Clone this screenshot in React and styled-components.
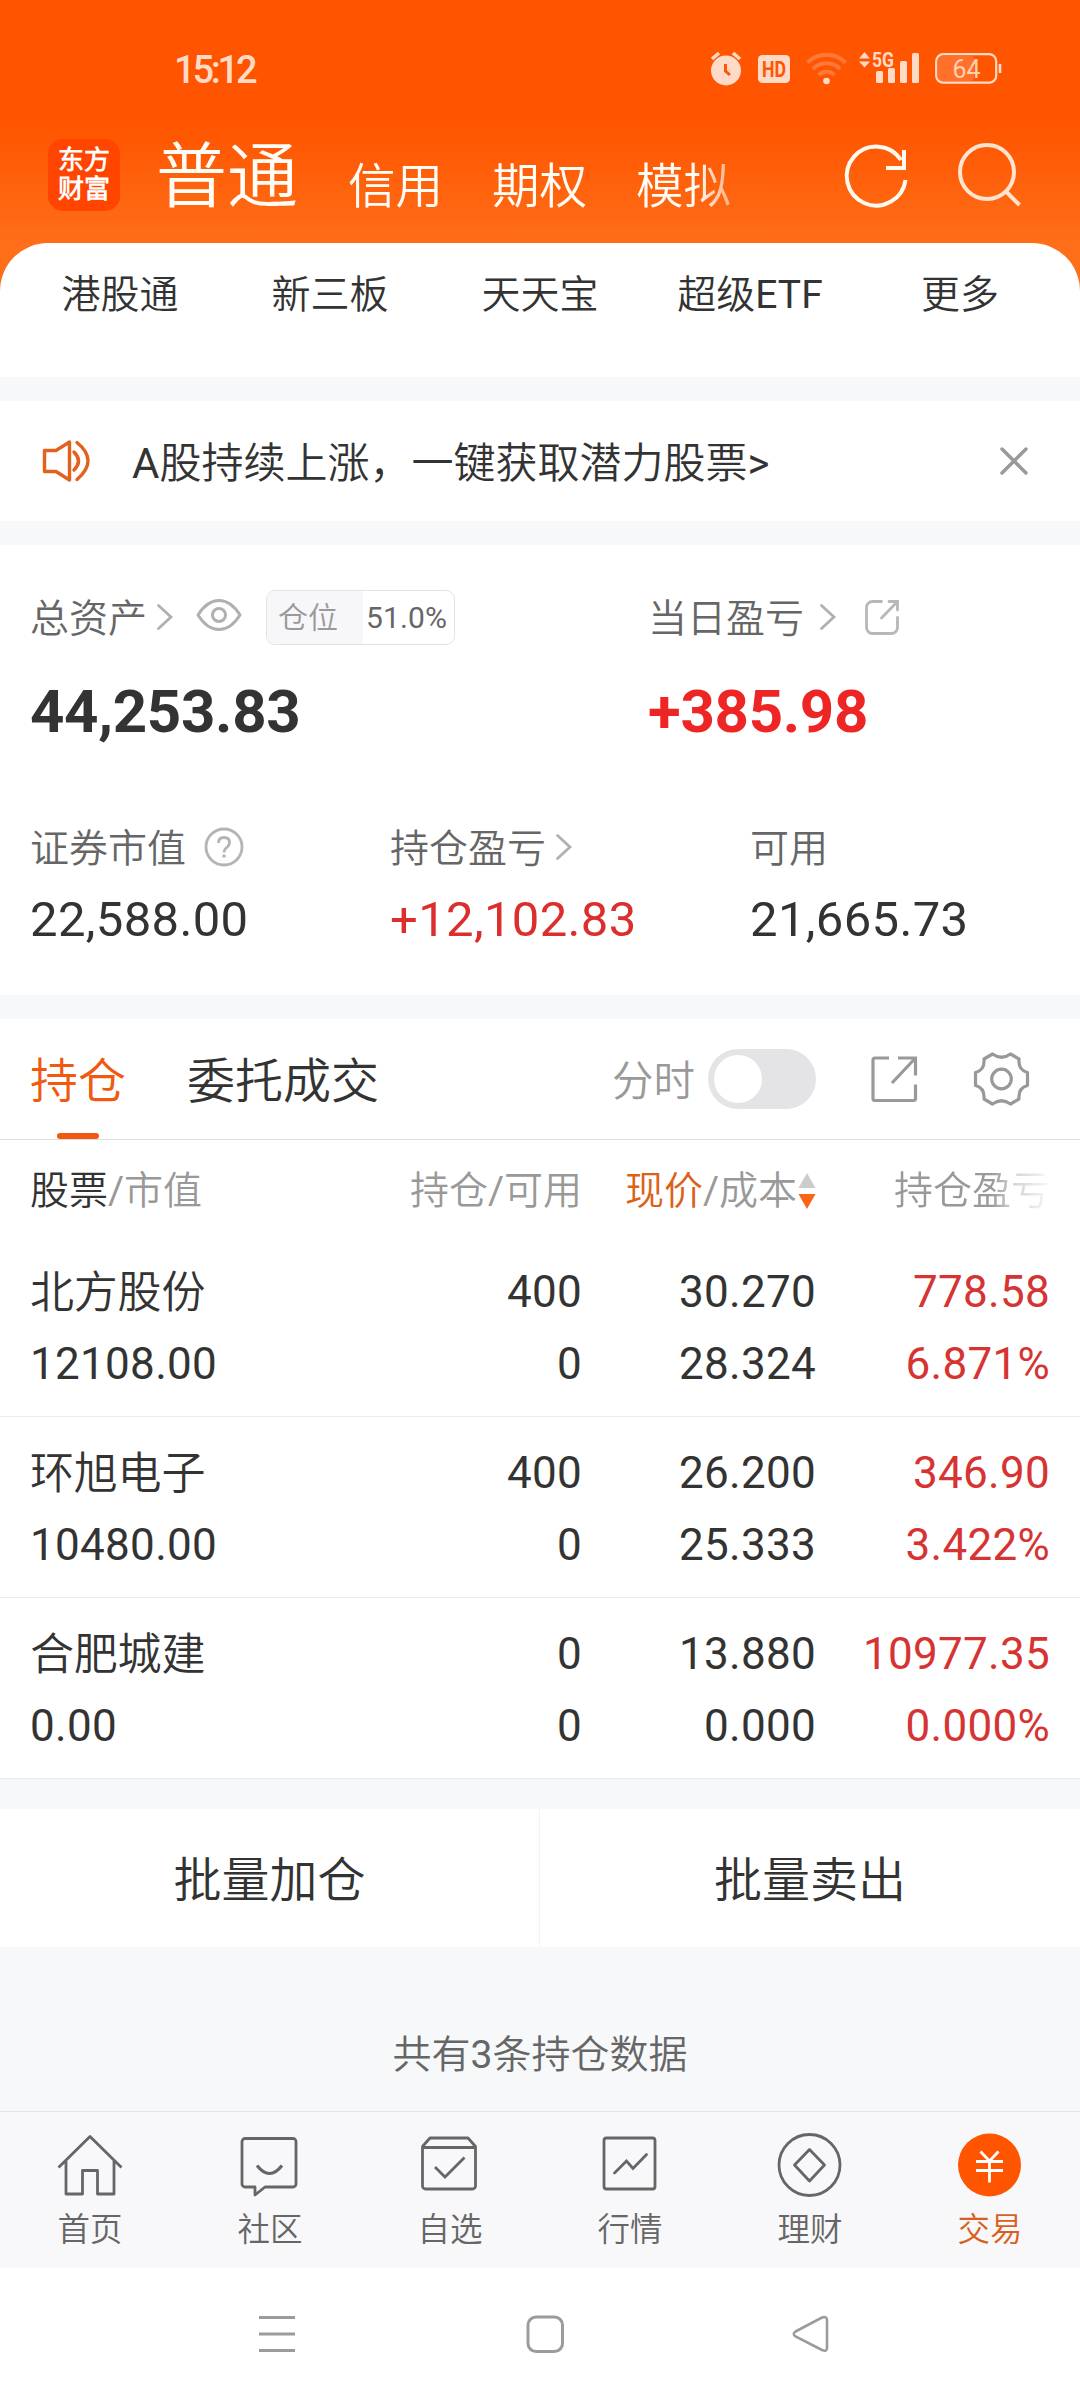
import React from "react";
import styled, { createGlobalStyle } from "styled-components";

const Global = createGlobalStyle`
  * { box-sizing: border-box; }
  html, body { margin: 0; padding: 0; background: #fff; }
  body {
    font-family: Roboto, "Noto Sans CJK SC DemiLight", "Noto Sans CJK SC", sans-serif;
    color: #333;
    font-weight: 400;
  }
`;

const Page = styled.div`
  width: 1080px;
  height: 2400px;
  overflow: hidden;
  display: flex;
  flex-direction: column;
  background: #fff;
`;

const Svg = styled.svg`
  display: block;
  flex: none;
  fill: none;
  stroke: ${(p) => p.$color || "#999"};
  stroke-width: ${(p) => p.$stroke || 3};
  margin: ${(p) => p.$m || "0"};
  overflow: visible;
`;

/* ---------- header ---------- */
const Header = styled.header`
  height: 291px;
  flex: none;
  background: linear-gradient(#ff5500 0, #ff5500 124px, #ff6f1a 250px);
`;

const StatusBar = styled.div`
  height: 138px;
  padding: 2px 78px 0 174px;
  display: flex;
  align-items: center;
  color: #ffdac6;
`;

const Clock = styled.span`
  font-size: 38px;
  line-height: 40px;
  letter-spacing: -3.2px;
  font-weight: 500;
  margin-right: auto;
`;

const TitleBar = styled.div`
  display: flex;
  align-items: flex-start;
  padding: 1px 0 0 48px;
`;

const Logo = styled.div`
  width: 72px;
  height: 72px;
  border-radius: 15px;
  background: #ff4500;
  color: #fff;
  font-size: 26px;
  font-weight: 900;
  line-height: 29px;
  padding-top: 7px;
  text-align: center;
`;

const TitleTabs = styled.nav`
  display: flex;
  align-items: flex-end;
  width: 620px;
  height: 74px;
  margin-left: 36px;
  color: #fffdf8;
  mask-image: linear-gradient(90deg, #000 540px, rgba(0, 0, 0, 0.4) 582px);
`;

const TitleTab = styled.span`
  font-size: ${(p) => (p.$active ? 71 : 47.5)}px;
  line-height: ${(p) => (p.$active ? 72 : 48)}px;
  margin-right: ${(p) => (p.$active ? 50 : 49)}px;
  padding-bottom: ${(p) => (p.$active ? 0 : 2)}px;
  white-space: nowrap;
`;

/* ---------- sheet ---------- */
const Shortcuts = styled.nav`
  flex: none;
  height: 134px;
  margin-top: -48px;
  border-radius: 48px 48px 0 0;
  background: #fff;
  padding: 28px 15px 0;
  display: grid;
  grid-template-columns: repeat(5, 210px);
  text-align: center;
  font-size: 39px;
  line-height: 48px;
`;

const Gap = styled.div`
  flex: none;
  height: ${(p) => p.$h || 24}px;
  background: #f7f8fa;
`;

const Notice = styled.div`
  flex: none;
  height: 120px;
  display: flex;
  align-items: center;
  padding: 0 52px 0 42px;
`;

const NoticeText = styled.span`
  font-size: 42px;
  line-height: 48px;
  margin: 5px auto 0 42px;
  white-space: nowrap;
`;

/* ---------- assets ---------- */
const Assets = styled.section`
  flex: none;
  height: 450px;
  padding: 45px 0 0 30px;
`;

const AssetGrid = styled.div`
  display: grid;
  grid-template-columns: ${(p) => p.$cols};
  margin-top: ${(p) => p.$top || 0}px;
`;

const Label = styled.div`
  display: flex;
  align-items: center;
  height: ${(p) => p.$h || 54}px;
  font-size: 39px;
  line-height: 48px;
  color: #666;
  white-space: nowrap;
`;

const LabelText = styled.span`
  padding-top: 4px;
`;

const BigValue = styled.div`
  font-size: 60px;
  line-height: 60px;
  font-weight: 700;
  margin-top: 38px;
  letter-spacing: -0.3px;
  color: ${(p) => (p.$up ? "#ee2525" : "#333")};
`;

const Value = styled.div`
  font-size: 49px;
  line-height: 50px;
  margin-top: 24px;
  letter-spacing: 0.35px;
  color: ${(p) => (p.$up ? "#dc2e2e" : "#333")};
`;

const Ratio = styled.span`
  display: flex;
  width: 189px;
  height: 55px;
  margin-left: 24px;
  border: 1px solid #e3e3e6;
  border-radius: 9px;
  overflow: hidden;
  font-size: 30px;
  line-height: 54px;
`;

const RatioName = styled.span`
  width: 96px;
  padding-left: 11px;
  background: #f7f7fa;
  color: #999;
`;

const RatioValue = styled.span`
  padding-left: 3px;
  letter-spacing: 0.1px;
  color: #666;
`;

/* ---------- holdings ---------- */
const TabBar = styled.div`
  flex: none;
  height: 121px;
  border-bottom: 1px solid #dedede;
  display: flex;
  align-items: center;
  padding: 0 51px 0 30px;
`;

const Tab = styled.span`
  display: flex;
  flex-direction: column;
  align-items: center;
  height: 120px;
  padding-top: 38px;
  margin-right: 61px;
  font-size: 48px;
  line-height: 50px;
  white-space: nowrap;
  color: ${(p) => (p.$active ? "#f0590f" : "#333")};
  &::after {
    content: "";
    width: 42px;
    height: 6px;
    margin-top: 26px;
    border-radius: 3px;
    background: ${(p) => (p.$active ? "#f0590f" : "transparent")};
  }
`;

const ToggleLabel = styled.span`
  font-size: 41.5px;
  line-height: 48px;
  color: #999;
  margin: 5px 13px 0 auto;
`;

const Toggle = styled.span`
  width: 108px;
  height: 60px;
  border-radius: 30px;
  background: #e4e4e6;
  padding: 6px;
  &::before {
    content: "";
    display: block;
    width: 48px;
    height: 48px;
    border-radius: 24px;
    background: #fff;
  }
`;

const tableColumns = "300px 252px 234px 234px";

const TableHead = styled.div`
  flex: none;
  height: 96px;
  padding: 27px 0 0 30px;
  display: grid;
  grid-template-columns: ${tableColumns};
  align-items: start;
  font-size: 39px;
  line-height: 48px;
  color: #999;
  white-space: nowrap;
`;

const HeadCell = styled.span`
  display: flex;
  align-items: center;
  justify-content: ${(p) => (p.$right ? "flex-end" : "flex-start")};
  padding-left: ${(p) => (p.$fade ? 78 : 0)}px;
  mask-image: ${(p) =>
    p.$fade
      ? "linear-gradient(90deg, #000 176px, rgba(0,0,0,0.45) 196px, rgba(0,0,0,0.06) 234px)"
      : "none"};
`;

const Em = styled.span`
  color: ${(p) => p.$color || "#333"};
`;

const Row = styled.div`
  flex: none;
  height: 181px;
  padding: 20px 0 0 30px;
  border-bottom: 1px solid #ebebeb;
  display: grid;
  grid-template-columns: ${tableColumns};
  grid-template-rows: 72px 72px;
  font-size: 44px;
  line-height: 72px;
  white-space: nowrap;
`;

const Cell = styled.span`
  text-align: ${(p) => (p.$left ? "left" : "right")};
  letter-spacing: ${(p) => (p.$name ? "-0.2px" : "0.3px")};
  padding-top: ${(p) => (p.$name ? "1px" : "0")};
  color: ${(p) => (p.$up ? "#d63333" : "#333")};
`;

const Actions = styled.div`
  flex: none;
  height: 138px;
  display: grid;
  grid-template-columns: 1fr 1fr;
`;

const Action = styled.button`
  border: 0;
  border-right: ${(p) => (p.$divider ? "1px solid #f2f2f2" : "0")};
  background: #fff;
  padding: 5px 0 0;
  font: inherit;
  font-size: 48px;
  line-height: 60px;
  color: #333;
`;

const Summary = styled.div`
  flex: none;
  height: 164px;
  background: #f7f8fa;
  padding-top: 84px;
  text-align: center;
  font-size: 39px;
  line-height: 48px;
  color: #666;
`;

/* ---------- bottom ---------- */
const BottomNav = styled.nav`
  flex: none;
  height: 157px;
  border-top: 1px solid #e3e4e6;
  background: #f8f8fa;
  display: grid;
  grid-template-columns: repeat(6, 180px);
`;

const NavItem = styled.div`
  display: flex;
  flex-direction: column;
  align-items: center;
  padding-top: 20px;
  font-size: 32.5px;
  line-height: 40px;
  color: ${(p) => (p.$active ? "#d9601c" : "#666")};
`;

const NavText = styled.span`
  margin-top: 12px;
`;

const SystemNav = styled.div`
  flex: none;
  height: 132px;
  display: flex;
  align-items: flex-start;
  padding: 47px 0 0 258px;
`;

const Chevron = ({ m }) => (
  <Svg $m={m} $color="#b0b0b0" $stroke={2.8} width="16" height="26" viewBox="0 0 16 26" strokeLinecap="round">
    <path d="M1.5 1.5 14 13 1.5 24.5" />
  </Svg>
);

const StatusIcons = () => (
  <Svg $color="none" width="304" height="40" viewBox="0 0 304 40" $m="0">
    {/* alarm */}
    <g fill="#ffdac6">
      <circle cx="28" cy="20.500" r="15" />
      <path d="M14 9 21 3M42 9 35 3" stroke="#ffdac6" strokeWidth="3.6" />
      <path d="M27.500 14v7l4.500 4" stroke="#ff5500" strokeWidth="3" fill="none" />
      {/* HD */}
      <rect x="60" y="5" width="32" height="28" rx="4.500" />
    </g>
    <text x="76" y="27" textAnchor="middle" fontSize="21.500" fontWeight="700" fill="#ff5500" textLength="24" lengthAdjust="spacingAndGlyphs">HD</text>
    {/* wifi */}
    <g stroke="#ff7a3a" strokeWidth="4" fill="none">
      <path d="M109.500 12.500a27 27 0 0 1 38 0" />
      <path d="M115 19a19 19 0 0 1 27 0" />
      <path d="M120.500 25a11.500 11.500 0 0 1 16 0" />
    </g>
    <circle cx="128.500" cy="31" r="3.300" fill="#ffdac6" />
    {/* signal */}
    <g fill="#ffdac6">
      <path d="M161 8.500 166.500 2 172 8.500zM161 11.500h11L166.500 17.500z" />
      <rect x="178" y="21" width="7" height="12" rx="1.500" />
      <rect x="190" y="18" width="7" height="15" rx="1.500" />
      <rect x="202" y="11" width="7" height="22" rx="1.500" />
      <rect x="214" y="3" width="7" height="30" rx="1.500" />
      <text x="174" y="16.500" fontSize="20" fontWeight="700" textLength="22" lengthAdjust="spacingAndGlyphs">5G</text>
    </g>
    {/* battery */}
    <rect x="240" y="6" width="36" height="25" rx="4" fill="#ff702b" />
    <rect x="238.200" y="4.200" width="60" height="28.500" rx="7" stroke="#ffdac6" strokeWidth="2.200" />
    <path d="M302 14v9" stroke="#ffdac6" strokeWidth="2.600" />
    <text x="268.500" y="28" textAnchor="middle" fontSize="26" fill="#ffd0b4" textLength="28" lengthAdjust="spacingAndGlyphs">64</text>
  </Svg>
);

const ShareSmall = () => (
  <Svg $m="0 0 0 29px" $color="#b8b8b8" $stroke={2.8} width="34" height="35" viewBox="0 0 34 35" strokeLinecap="round">
    <path d="M16.500 1.500H7.500a6 6 0 0 0-6 6v20a6 6 0 0 0 6 6h19a6 6 0 0 0 6-6V17.500" />
    <path d="M24 1.500h8.500v8.500M32 2 16.500 18" />
  </Svg>
);

const holdings = [
  { name: "北方股份", value: "12108.00", qty: "400", free: "0", price: "30.270", cost: "28.324", gain: "778.58", rate: "6.871%" },
  { name: "环旭电子", value: "10480.00", qty: "400", free: "0", price: "26.200", cost: "25.333", gain: "346.90", rate: "3.422%" },
  { name: "合肥城建", value: "0.00", qty: "0", free: "0", price: "13.880", cost: "0.000", gain: "10977.35", rate: "0.000%" },
];

const navItems = [
  {
    text: "首页",
    icon: <path d="M1.500 35.500 33 4.500l31.500 31M9 29v33h16.500V38.500h15V62H57V29" strokeLinejoin="round" />,
  },
  {
    text: "社区",
    icon: (
      <>
        <path d="M8 6.500h48a3 3 0 0 1 3 3V52a3 3 0 0 1-3 3H28l-10 8V55H8a3 3 0 0 1-3-3V9.500a3 3 0 0 1 3-3z" strokeLinejoin="round" />
        <path d="M20 33.500q12.500 16 25 0" strokeWidth="3.200" />
      </>
    ),
  },
  {
    text: "自选",
    icon: (
      <>
        <path d="M5.500 14.500 13 6h38l7.500 8.500V54a3 3 0 0 1-3 3h-47a3 3 0 0 1-3-3zM5.500 15.500h53" strokeLinejoin="round" />
        <path d="M18 35 28 45 47.500 25.500" />
      </>
    ),
  },
  {
    text: "行情",
    icon: (
      <>
        <rect x="7" y="6" width="51" height="51" rx="2.500" />
        <path d="M17.500 41 29.500 29 36 36.500 49.500 22.500" strokeLinecap="round" />
      </>
    ),
  },
  {
    text: "理财",
    icon: (
      <>
        <circle cx="32.500" cy="33" r="30.500" />
        <path d="M32.500 17.500 47.500 33 32.500 49 17.500 33z" strokeLinejoin="round" />
      </>
    ),
  },
  {
    text: "交易",
    active: true,
    icon: (
      <>
        <circle cx="32.500" cy="33" r="31.500" fill="#ff5500" stroke="none" />
        <path d="M23.500 19.500 32.500 29 41.500 19.500M32.500 29V50.500M19 29.500h27M19 38.500h27" stroke="#fff" />
      </>
    ),
  },
];

export default function App() {
  return (
    <Page>
      <Global />
      <Header>
        <StatusBar>
          <Clock>15:12</Clock>
          <StatusIcons />
        </StatusBar>
        <TitleBar>
          <Logo>东方<br />财富</Logo>
          <TitleTabs>
            <TitleTab $active>普通</TitleTab>
            <TitleTab>信用</TitleTab>
            <TitleTab>期权</TitleTab>
            <TitleTab>模拟</TitleTab>
          </TitleTabs>
          <Svg $m="5px 0 0 69px" $color="#fffaf0" $stroke={4} width="64" height="66" viewBox="0 0 64 66">
            <path d="M60.500 36A29.500 29.500 0 1 1 56 16" />
            <path d="M59 6v18H41" />
          </Svg>
          <Svg $m="3px 0 0 49px" $color="#ffe4d0" $stroke={4} width="64" height="66" viewBox="0 0 64 66">
            <circle cx="29" cy="30" r="27" />
            <path d="M47 48.500 61.500 63" />
          </Svg>
        </TitleBar>
      </Header>

      <Shortcuts>
        {["港股通", "新三板", "天天宝", "超级ETF", "更多"].map((t) => (
          <span key={t}>{t}</span>
        ))}
      </Shortcuts>
      <Gap />
      <Notice>
        <Svg $color="#e4611d" $stroke={3.4} width="48" height="42" viewBox="0 0 48 42" strokeLinejoin="round" strokeLinecap="round">
          <path d="M2.500 10.500H14L27.500 2v38L14 31.500H2.500z" />
          <path d="M32 12q9 9 0 18M35 2.500q22 18 0 37" />
        </Svg>
        <NoticeText>A股持续上涨，一键获取潜力股票&gt;</NoticeText>
        <Svg $color="#999" $stroke={3.4} width="28" height="28" viewBox="0 0 28 28" strokeLinecap="round">
          <path d="M2 2 26 26M26 2 2 26" />
        </Svg>
      </Notice>
      <Gap />

      <Assets>
        <AssetGrid $cols="618px 1fr">
          <div>
            <Label>
              <LabelText>总资产</LabelText>
              <Chevron m="0 0 0 10px" />
              <Svg $m="-4px 0 0 23px" $color="#b0b0b0" $stroke={3} width="46" height="32" viewBox="0 0 46 32">
                <path d="M2 16Q11 1.500 23 1.500T44 16Q35 30.500 23 30.500T2 16z" strokeLinejoin="round" />
                <circle cx="23" cy="16" r="6.500" />
              </Svg>
              <Ratio>
                <RatioName>仓位</RatioName>
                <RatioValue>51.0%</RatioValue>
              </Ratio>
            </Label>
            <BigValue>44,253.83</BigValue>
          </div>
          <div>
            <Label>
              <LabelText>当日盈亏</LabelText>
              <Chevron m="0 0 0 16px" />
              <ShareSmall />
            </Label>
            <BigValue $up>+385.98</BigValue>
          </div>
        </AssetGrid>
        <AssetGrid $cols="360px 360px 1fr" $top={81}>
          <div>
            <Label $h={48}>
              <LabelText>证券市值</LabelText>
              <Svg $m="0 0 0 18px" $color="#b4b4b4" $stroke={2.8} width="40" height="40" viewBox="0 0 40 40">
                <circle cx="20" cy="20" r="18" />
                <path d="M14.500 16q0-5.500 5.500-5.500t5.500 5q0 3-3.200 5.300Q20 22.600 20 25.500" />
                <circle cx="20" cy="29" r="1.800" fill="#b4b4b4" stroke="none" />
              </Svg>
            </Label>
            <Value>22,588.00</Value>
          </div>
          <div>
            <Label $h={48}>
              <LabelText>持仓盈亏</LabelText>
              <Chevron m="0 0 0 10px" />
            </Label>
            <Value $up>+12,102.83</Value>
          </div>
          <div>
            <Label $h={48}>
              <LabelText>可用</LabelText>
            </Label>
            <Value>21,665.73</Value>
          </div>
        </AssetGrid>
      </Assets>
      <Gap />

      <TabBar>
        <Tab $active>持仓</Tab>
        <Tab>委托成交</Tab>
        <ToggleLabel>分时</ToggleLabel>
        <Toggle />
        <Svg $m="0 0 0 54px" $color="#999" $stroke={3.2} width="48" height="48" viewBox="0 0 48 48">
          <path d="M19 3H5a2 2 0 0 0-2 2v38.500a2 2 0 0 0 2 2h38.500a2 2 0 0 0 2-2V29.500" />
          <path d="M28 3h17.500v17.500M45 3.500 22 28" />
        </Svg>
        <Svg $m="0 0 0 56px" $color="#999" $stroke={3.2} width="55" height="54" viewBox="0 0 55 54" strokeLinejoin="round">
          <path d="M18.500 2Q27.500 8.500 36.500 2L45 7Q44 18 53.500 20.500V33.500Q44 36 45 47L36.500 52Q27.500 45.500 18.500 52L10 47Q11 36 1.500 33.500V20.500Q11 18 10 7Z" />
          <circle cx="27.500" cy="27" r="9.800" />
        </Svg>
      </TabBar>

      <TableHead>
        <HeadCell><Em>股票</Em>/市值</HeadCell>
        <HeadCell $right>持仓/可用</HeadCell>
        <HeadCell $right>
          <Em $color="#dc6118">现价</Em>/成本
          <Svg $m="0 0 0 1px" $color="none" width="18" height="36" viewBox="0 0 18 36">
            <path d="M9 0 17.500 15H0.500z" fill="#ccc" />
            <path d="M9 36 0.500 21h17z" fill="#fa6414" />
          </Svg>
        </HeadCell>
        <HeadCell $fade>持仓盈亏</HeadCell>
      </TableHead>
      {holdings.map((h) => (
        <Row key={h.name}>
          <Cell $left $name>{h.name}</Cell>
          <Cell>{h.qty}</Cell>
          <Cell>{h.price}</Cell>
          <Cell $up>{h.gain}</Cell>
          <Cell $left>{h.value}</Cell>
          <Cell>{h.free}</Cell>
          <Cell>{h.cost}</Cell>
          <Cell $up>{h.rate}</Cell>
        </Row>
      ))}
      <Gap $h={30} />
      <Actions>
        <Action $divider>批量加仓</Action>
        <Action>批量卖出</Action>
      </Actions>
      <Summary>共有3条持仓数据</Summary>

      <BottomNav>
        {navItems.map((n) => (
          <NavItem key={n.text} $active={n.active}>
            <Svg $color="#666" $stroke={2.8} width="66" height="66" viewBox="0 0 66 66">{n.icon}</Svg>
            <NavText>{n.text}</NavText>
          </NavItem>
        ))}
      </BottomNav>
      <SystemNav>
        <Svg $color="#9b9b9b" $stroke={3.2} width="38" height="38" viewBox="0 0 38 38">
          <path d="M1 2.500h36M1 19h36M1 35.500h36" />
        </Svg>
        <Svg $m="0 0 0 230px" $color="#9b9b9b" $stroke={3} width="38" height="38" viewBox="0 0 38 38">
          <rect x="2" y="2" width="34.500" height="34.500" rx="8" />
        </Svg>
        <Svg $m="0 0 0 228px" $color="#9b9b9b" $stroke={2.600} width="38" height="38" viewBox="0 0 38 38">
          <path d="M3.500 16.500 30 2.500Q35 1 35 5V33Q35 37 30 35L3.500 21.500Q0 19 3.500 16.500z" />
        </Svg>
      </SystemNav>
    </Page>
  );
}
